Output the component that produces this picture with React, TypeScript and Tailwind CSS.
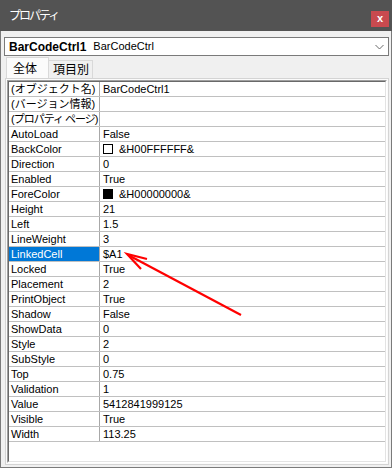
import React from "react";

type Row = {
  name: string;
  value: string;
  swatch?: "white" | "black";
  selected?: boolean;
  tight?: boolean;
};

const rows: Row[] = [
  { name: "(オブジェクト名)", value: "BarCodeCtrl1" },
  { name: "(バージョン情報)", value: "" },
  { name: "(プロパティ ページ)", value: "", tight: true },
  { name: "AutoLoad", value: "False" },
  { name: "BackColor", value: "&H00FFFFFF&", swatch: "white" },
  { name: "Direction", value: "0" },
  { name: "Enabled", value: "True" },
  { name: "ForeColor", value: "&H00000000&", swatch: "black" },
  { name: "Height", value: "21" },
  { name: "Left", value: "1.5" },
  { name: "LineWeight", value: "3" },
  { name: "LinkedCell", value: "$A1", selected: true },
  { name: "Locked", value: "True" },
  { name: "Placement", value: "2" },
  { name: "PrintObject", value: "True" },
  { name: "Shadow", value: "False" },
  { name: "ShowData", value: "0" },
  { name: "Style", value: "2" },
  { name: "SubStyle", value: "0" },
  { name: "Top", value: "0.75" },
  { name: "Validation", value: "1" },
  { name: "Value", value: "5412841999125" },
  { name: "Visible", value: "True" },
  { name: "Width", value: "113.25" },
];

export default function App() {
  return (
    <div className="relative w-[392px] h-[468px] flex flex-col overflow-hidden font-['Liberation_Sans','Noto_Sans_CJK_JP',sans-serif] text-black">
      {/* title bar */}
      <div className="h-[31px] shrink-0 bg-[#535353] flex items-start justify-between pl-[9px] pr-[3px]">
        <span className="mt-[8px] text-[12px] leading-[14px] tracking-[-2px] text-white font-['Noto_Sans_CJK_JP',sans-serif]">
          プロパティ
        </span>
        <div className="mt-[11px] w-[18px] h-[16px] bg-[#c94a4f] flex items-center justify-center">
          <span className="text-[11px] leading-none font-bold text-white -mt-[1px]">x</span>
        </div>
      </div>

      {/* body */}
      <div className="flex-1 flex flex-col bg-[#f0f0f0] border-x border-b border-[#7a7a7a] pl-[3px] pr-[2px] pt-[6px] pb-[2px]">
        {/* object dropdown */}
        <div className="h-[19px] shrink-0 bg-white border border-[#7a7a7a] flex items-center pl-[4px] pr-[4px]">
          <span className="text-[12px] font-bold leading-none">BarCodeCtrl1</span>
          <span className="ml-[7px] text-[11px] leading-none">BarCodeCtrl</span>
          <svg className="ml-auto" width="9" height="6" viewBox="0 0 9 6">
            <path d="M0.5 1 L4.5 5 L8.5 1" fill="none" stroke="#6b6b6b" strokeWidth="1" />
          </svg>
        </div>

        {/* tabs */}
        <div className="h-[21px] shrink-0 mt-[1px] flex items-end pl-[2px] text-[12px] font-['Noto_Sans_CJK_JP',sans-serif]">
          <div className="h-[21px] w-[43px] bg-[#fbfbfb] border-t border-x border-[#d9d9d9] pl-[6px] pt-[2px] leading-[16px]">
            全体
          </div>
          <div className="h-[18px] w-[44px] border-t border-r border-[#d9d9d9] pl-[4px] leading-[16px]">
            項目別
          </div>
        </div>

        {/* property grid */}
        <div className="flex-1 ml-[1px] border border-[#d4d4d4] bg-[#fbfbfb] p-[1px] flex flex-col">
          <div className="flex-1 flex flex-col border border-t-[#a0a0a0] border-l-[#a0a0a0] border-r-[#ffffff] border-b-[#ffffff]">
            <div className="flex-1 bg-white border border-t-[#696969] border-l-[#696969] border-r-[#e3e3e3] border-b-[#e3e3e3] text-[11px]">
              {rows.map((r) => (
                <div key={r.name} className="flex h-[15px] border-b border-[#c0c0c0]">
                  <div
                    className={`w-[91px] shrink-0 border-r border-[#a8a8a8] pl-[2px] leading-[14px] whitespace-nowrap overflow-hidden ${
                      r.selected ? "bg-[#0078d7] text-white" : ""
                    } ${r.tight ? "tracking-[-1px]" : ""}`}
                  >
                    {r.name}
                  </div>
                  <div className="flex-1 flex items-center pl-[3px] leading-[14px] whitespace-nowrap">
                    {r.swatch && (
                      <span
                        className={`w-[10px] h-[10px] mr-[6px] border border-black ${
                          r.swatch === "black" ? "bg-black" : "bg-white"
                        }`}
                      />
                    )}
                    {r.value}
                  </div>
                </div>
              ))}
            </div>
          </div>
        </div>
      </div>

      {/* annotation arrow */}
      <svg className="absolute inset-0 pointer-events-none" width="392" height="468" viewBox="0 0 392 468">
        <path d="M241 315 L130 256" stroke="#ff0000" strokeWidth="2.2" fill="none" />
        <path d="M147 259 L127 254 L141 269" stroke="#ff0000" strokeWidth="2.2" fill="none" strokeLinejoin="miter" />
      </svg>
    </div>
  );
}
